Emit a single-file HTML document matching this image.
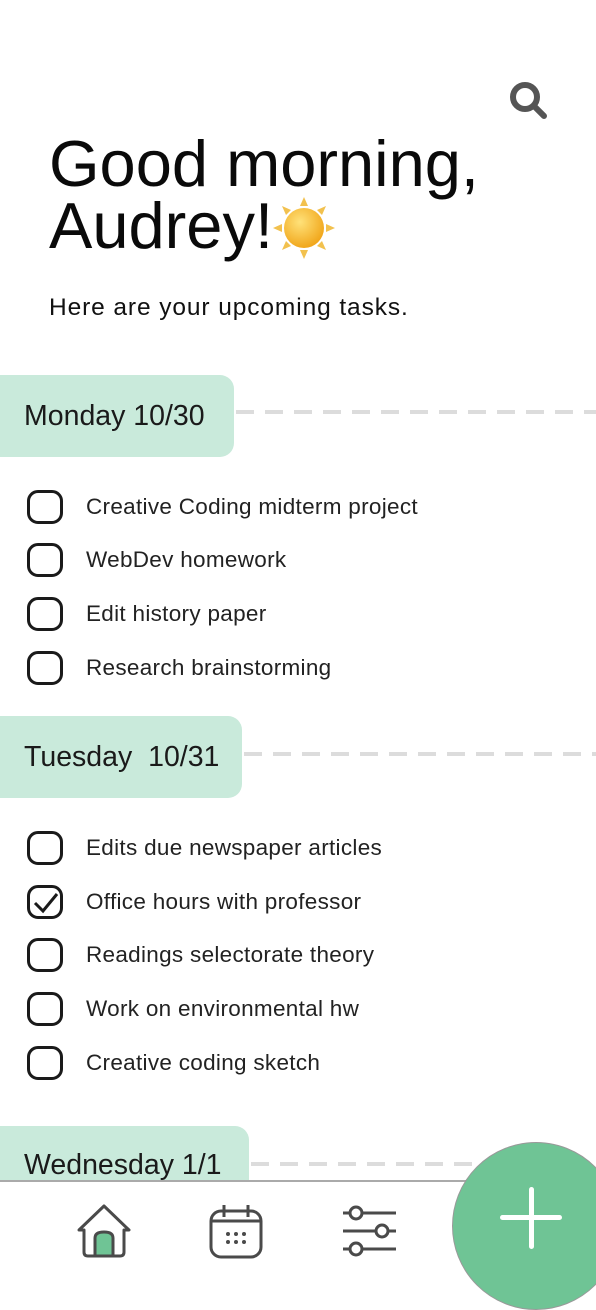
<!DOCTYPE html>
<html><head><meta charset="utf-8"><style>
*{margin:0;padding:0;box-sizing:border-box}
body{width:596px;height:1292px;background:#fff;position:relative;overflow:hidden;font-family:"Liberation Sans",sans-serif;color:#111}
.abs{position:absolute}
h1{position:absolute;left:49px;top:133px;font-size:65px;font-weight:400;line-height:62px;letter-spacing:0;color:#0a0a0a}
.sub{left:49px;top:294px;font-size:24.5px;letter-spacing:0.9px}
.tag{position:absolute;left:0;background:#c9eadb;border-radius:0 14px 14px 0;font-size:28.5px;color:#1a1a1a;padding-left:24px;line-height:82px;height:82px}
.dash{position:absolute;right:0;height:4px;background:repeating-linear-gradient(90deg,#dcdcdc 0 18px,transparent 18px 29px)}
.task{position:absolute;left:27px;height:36px;display:flex;align-items:center;font-size:22.5px;letter-spacing:0.3px;color:#222}
.cb{width:36px;height:34px;border:3px solid #1a1a1a;border-radius:11px;margin-right:23px;position:relative}
</style></head><body>
<svg class="abs" style="left:507px;top:80px" width="44" height="42" viewBox="0 0 44 42"><circle cx="18" cy="17" r="12" fill="none" stroke="#555" stroke-width="6"/><line x1="27" y1="26" x2="37" y2="36" stroke="#555" stroke-width="6" stroke-linecap="round"/></svg>
<h1>Good morning,<br>Audrey!</h1>
<svg class="abs" style="left:273px;top:197px" width="62" height="62" viewBox="0 0 62 62"><g fill="#f2c14e"><polygon points="31,0 35,9 27,9"/><polygon points="31,62 35,53 27,53"/><polygon points="0,31 9,27 9,35"/><polygon points="62,31 53,27 53,35"/><polygon points="9,9 18,13 13,18"/><polygon points="53,9 44,13 49,18"/><polygon points="9,53 18,49 13,44"/><polygon points="53,53 44,49 49,44"/></g><defs><radialGradient id="g" cx="40%" cy="35%" r="65%"><stop offset="0" stop-color="#ffe27a"/><stop offset="1" stop-color="#f1a71c"/></radialGradient></defs><circle cx="31" cy="31" r="20" fill="url(#g)"/></svg>
<div class="abs sub">Here are your upcoming tasks.</div>

<div class="tag" style="top:375px;width:234px">Monday 10/30</div>
<div class="dash" style="top:410px;left:236px"></div>
<div class="task" style="top:489px"><div class="cb"></div>Creative Coding midterm project</div>
<div class="task" style="top:542px"><div class="cb"></div>WebDev homework</div>
<div class="task" style="top:596px"><div class="cb"></div>Edit history paper</div>
<div class="task" style="top:650px"><div class="cb"></div>Research brainstorming</div>

<div class="tag" style="top:716px;width:242px">Tuesday&nbsp; 10/31</div>
<div class="dash" style="top:752px;left:244px"></div>
<div class="task" style="top:830px"><div class="cb"></div>Edits due newspaper articles</div>
<div class="task" style="top:884px"><div class="cb"><svg class="abs" style="left:2px;top:2px" width="28" height="26" viewBox="0 0 28 26"><polyline points="3,13 11,21 25,4" fill="none" stroke="#1a1a1a" stroke-width="3"/></svg></div>Office hours with professor</div>
<div class="task" style="top:937px"><div class="cb"></div>Readings selectorate theory</div>
<div class="task" style="top:991px"><div class="cb"></div>Work on environmental hw</div>
<div class="task" style="top:1045px"><div class="cb"></div>Creative coding sketch</div>

<div class="tag" style="top:1126px;width:249px;line-height:78px">Wednesday 1/1</div>
<div class="dash" style="top:1162px;left:251px"></div>

<div class="abs" style="left:0;top:1180px;width:596px;height:112px;background:#fff;border-top:2px solid #aaa"></div>
<svg class="abs" style="left:76px;top:1200px" width="56" height="60" viewBox="0 0 56 60"><path d="M8,52 V30 H3 L28,6 L53,30 H48 V52 Q48,56 44,56 H12 Q8,56 8,52 Z" fill="none" stroke="#4a4a4a" stroke-width="3" stroke-linejoin="round"/><path d="M19,56 V38 Q19,32 28,32 Q37,32 37,38 V56 Z" fill="#6fc495" stroke="#4a4a4a" stroke-width="3"/></svg>
<svg class="abs" style="left:208px;top:1203px" width="56" height="58" viewBox="0 0 56 58"><rect x="3" y="8" width="50" height="46" rx="10" fill="none" stroke="#4a4a4a" stroke-width="3"/><line x1="3" y1="18" x2="53" y2="18" stroke="#4a4a4a" stroke-width="3"/><line x1="16" y1="2" x2="16" y2="14" stroke="#4a4a4a" stroke-width="3"/><line x1="40" y1="2" x2="40" y2="14" stroke="#4a4a4a" stroke-width="3"/><g fill="#4a4a4a"><circle cx="20" cy="31" r="2"/><circle cx="28" cy="31" r="2"/><circle cx="36" cy="31" r="2"/><circle cx="20" cy="39" r="2"/><circle cx="28" cy="39" r="2"/><circle cx="36" cy="39" r="2"/></g></svg>
<svg class="abs" style="left:342px;top:1203px" width="56" height="56" viewBox="0 0 56 56"><g stroke="#4a4a4a" stroke-width="3" fill="#fff"><line x1="1" y1="10" x2="54" y2="10"/><line x1="1" y1="28" x2="54" y2="28"/><line x1="1" y1="46" x2="54" y2="46"/><circle cx="14" cy="10" r="6"/><circle cx="40" cy="28" r="6"/><circle cx="14" cy="46" r="6"/></g></svg>
<div class="abs" style="left:452px;top:1142px;width:168px;height:168px;border-radius:50%;background:#6fc495;border:1.5px solid #999"></div>
<div class="abs" style="left:500px;top:1215px;width:62px;height:5px;background:#fff;border-radius:3px"></div>
<div class="abs" style="left:529px;top:1187px;width:5px;height:62px;background:#fff;border-radius:3px"></div>
</body></html>
